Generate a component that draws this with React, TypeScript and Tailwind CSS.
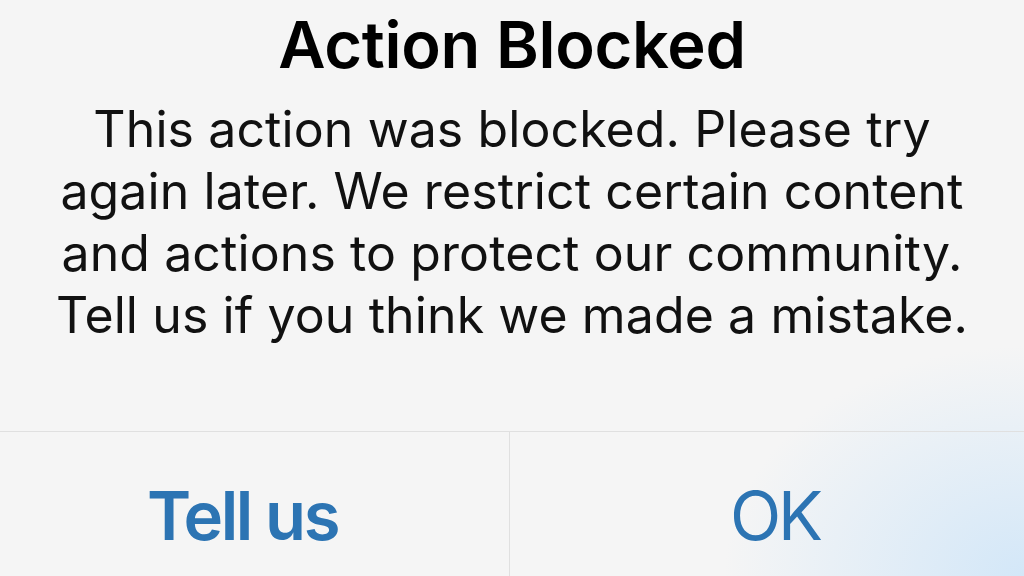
import React from 'react';

const lines = [
  'This action was blocked. Please try',
  'again later. We restrict certain content',
  'and actions to protect our community.',
  'Tell us if you think we made a mistake.',
];

const App: React.FC = () => {
  return (
    <div className="relative w-full h-[576px] overflow-hidden bg-[#f5f5f5] font-['Inter',sans-serif] text-black bg-[radial-gradient(ellipse_300px_230px_at_100%_100%,#d3e7f8,transparent)]">
      {/* Message */}
      <div className="flex flex-col items-center h-[431px] pt-[9px]">
        <h1 className="text-[65px] leading-[72px] font-semibold tracking-[-0.3px]">Action Blocked</h1>
        <p className="mt-[17px] text-[50px] leading-[62px] text-center text-[#111] tracking-[0.1px]">
          {lines.map((l, i) => (
            <span key={i} className="block whitespace-nowrap">{l}</span>
          ))}
        </p>
      </div>

      {/* Buttons */}
      <div className="flex border-t border-[#e0e0e0] h-[145px]">
        <button className="w-[509px] flex items-start justify-center pt-[48px] pr-[24px] text-[67px] leading-[72px] font-semibold text-[#2c74b3] tracking-[-2.5px]">
          Tell us
        </button>
        <button className="flex-1 flex items-start justify-center pt-[48px] pl-[16px] text-[67px] leading-[72px] text-[#2c74b3] border-l border-[#e0e0e0] tracking-[-3px]">
          OK
        </button>
      </div>
    </div>
  );
};

export default App;
